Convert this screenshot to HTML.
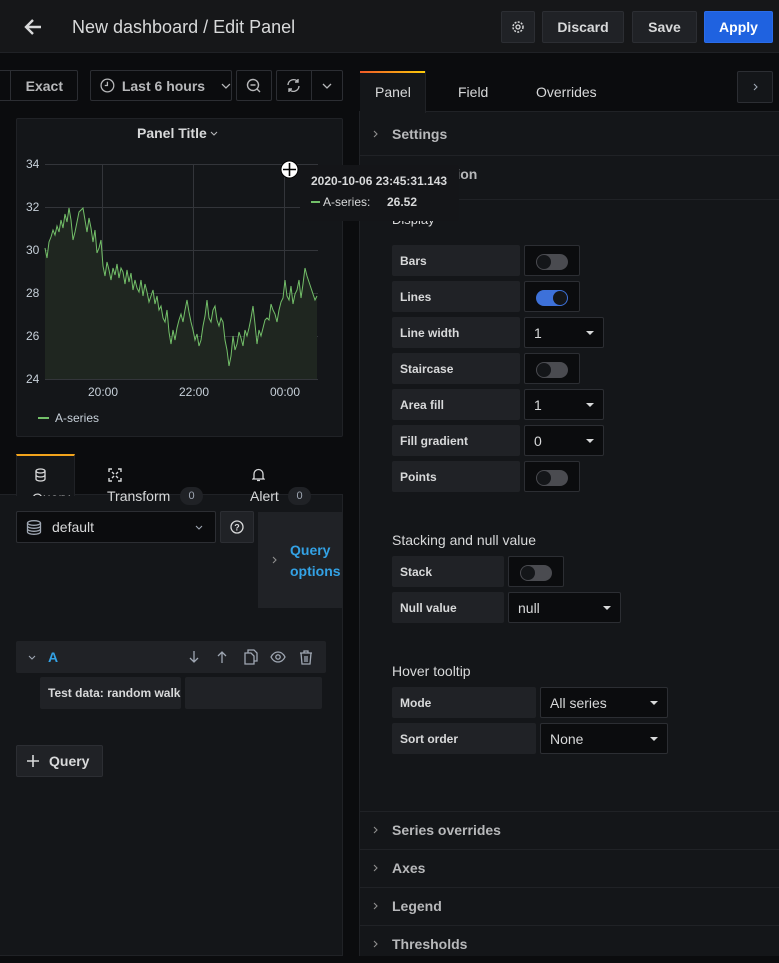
<!DOCTYPE html>
<html><head><meta charset="utf-8"><style>
*{box-sizing:border-box;margin:0;padding:0}
body{width:779px;height:956px;overflow:hidden;background:#0b0c0e;font-family:"Liberation Sans",sans-serif;color:#d8d9da;position:relative;font-size:14px}
.a{position:absolute}
.btn{position:absolute;background:#202226;border:1px solid #2c2e33;border-radius:2px;color:#d8d9da;font-weight:bold;font-size:14px;display:flex;align-items:center;justify-content:center}
.tb{position:absolute;background:#0b0c0e;border:1px solid #2c2e33;border-radius:2px;color:#c7d0d9;display:flex;align-items:center;justify-content:center;font-size:14px;font-weight:bold;white-space:nowrap}
.lbl{position:absolute;left:392px;height:31px;background:#202226;border-radius:2px;font-size:12px;font-weight:bold;color:#d8d9da;padding-left:8px;display:flex;align-items:center}
.ctl{position:absolute;height:31px;background:#0b0c0e;border:1px solid #2c2e33;border-radius:2px;color:#d8d9da;font-size:14px;padding-left:9px;display:flex;align-items:center}
.tg{position:absolute;left:11px;top:8px;width:32px;height:16px;border-radius:8px;background:#4a4b50}
.tg:after{content:"";position:absolute;left:1px;top:1px;width:14px;height:14px;border-radius:7px;background:#141619}
.tg.on{background:#3d71d9}.tg.on:after{left:17px}
.car{position:absolute;right:9px;top:13px;width:0;height:0;border-left:4px solid transparent;border-right:4px solid transparent;border-top:4px solid #d8d9da}
.sec{position:absolute;left:360px;width:419px;border-top:1px solid #202226;height:38px}
.sec span{position:absolute;left:32px;top:10px;font-size:14px;font-weight:bold;color:#b7b8ba}
.sec svg{position:absolute;left:13px;top:14px}
.h{position:absolute;left:392px;font-size:14px;color:#d8d9da}
</style></head><body>
<!-- header -->
<div class="a" style="left:0;top:0;width:779px;height:53px;background:#161719;border-bottom:1px solid #202226"></div>
<svg class="a" style="left:22px;top:16px" width="22" height="22" viewBox="0 0 22 22"><path d="M19 11H4M11 4L4 11l7 7" stroke="#d8d9da" stroke-width="2.4" fill="none"/></svg>
<div class="a" style="left:72px;top:17px;font-size:18px;color:#d8d9da">New dashboard / Edit Panel</div>
<div class="btn" style="left:501px;top:11px;width:34px;height:32px"><svg width="14" height="14" viewBox="0 0 14 14"><circle cx="7" cy="7" r="2" fill="none" stroke="#d8d9da" stroke-width="1.3"/><circle cx="7" cy="7" r="5" fill="none" stroke="#d8d9da" stroke-width="1.5" stroke-dasharray="2 1.3"/></svg></div>
<div class="btn" style="left:542px;top:11px;width:82px;height:32px">Discard</div>
<div class="btn" style="left:632px;top:11px;width:65px;height:32px">Save</div>
<div class="btn" style="left:704px;top:11px;width:69px;height:32px;background:#1f62e0;border-color:#2b6ce8;color:#fff">Apply</div>

<!-- left toolbar -->
<div class="tb" style="left:-2px;top:70px;width:80px;height:31px;justify-content:flex-end;padding-right:14px;color:#b7b8ba">Exact</div>
<div class="a" style="left:10px;top:71px;width:1px;height:29px;background:#2c2e33"></div>
<div class="tb" style="left:90px;top:70px;width:142px;height:31px;justify-content:flex-start;padding-left:9px;color:#b7b8ba"><svg width="15" height="15" viewBox="0 0 14 14"><circle cx="7" cy="7" r="6" fill="none" stroke="#b7b8ba" stroke-width="1.2"/><path d="M7 3.5V7H4.5" stroke="#b7b8ba" stroke-width="1.2" fill="none"/></svg><span style="margin-left:7px">Last 6 hours</span><svg style="margin-left:16px" width="10" height="6" viewBox="0 0 10 6"><path d="M1 1l4 4 4-4" stroke="#b7b8ba" stroke-width="1.3" fill="none"/></svg></div>
<div class="tb" style="left:236px;top:70px;width:36px;height:31px"><svg width="16" height="16" viewBox="0 0 16 16"><circle cx="7" cy="7" r="5.5" fill="none" stroke="#b7b8ba" stroke-width="1.4"/><path d="M4.5 7h5M11 11l3 3" stroke="#b7b8ba" stroke-width="1.4"/></svg></div>
<div class="tb" style="left:276px;top:70px;width:67px;height:31px"></div>
<div class="a" style="left:311px;top:71px;width:1px;height:29px;background:#2c2e33"></div>
<svg class="a" style="left:285px;top:77px" width="17" height="17" viewBox="0 0 17 17"><path d="M3 8a5.5 5.5 0 0 1 10-3M14 9a5.5 5.5 0 0 1-10 3M13 2v3h-3M4 15v-3h3" stroke="#b7b8ba" stroke-width="1.4" fill="none"/></svg>
<svg class="a" style="left:322px;top:83px" width="10" height="6" viewBox="0 0 10 6"><path d="M1 1l4 4 4-4" stroke="#b7b8ba" stroke-width="1.3" fill="none"/></svg>

<!-- panel -->
<div class="a" style="left:16px;top:118px;width:327px;height:319px;background:#141619;border:1px solid #202226;border-radius:2px"></div>
<div class="a" style="left:137px;top:125px;font-size:14px;font-weight:bold;color:#d8d9da">Panel Title</div>
<svg class="a" style="left:210px;top:131px" width="8" height="5" viewBox="0 0 8 5"><path d="M1 1l3 3 3-3" stroke="#b7b8ba" stroke-width="1.1" fill="none"/></svg>
<svg class="a" style="left:0;top:0" width="360" height="440">
<g stroke="#33353a" stroke-width="1"><line x1="45" y1="164.5" x2="318" y2="164.5"/><line x1="45" y1="207.5" x2="318" y2="207.5"/><line x1="45" y1="250.5" x2="318" y2="250.5"/><line x1="45" y1="293.5" x2="318" y2="293.5"/><line x1="45" y1="336.5" x2="318" y2="336.5"/><line x1="45" y1="379.5" x2="318" y2="379.5"/><line x1="102.5" y1="164" x2="102.5" y2="380"/><line x1="193.5" y1="164" x2="193.5" y2="380"/><line x1="284.5" y1="164" x2="284.5" y2="380"/></g>
<g font-size="12" fill="#c7d0d9" font-family="Liberation Sans"><text x="26" y="168">34</text><text x="26" y="211">32</text><text x="26" y="254">30</text><text x="26" y="297">28</text><text x="26" y="340">26</text><text x="26" y="383">24</text><text x="88" y="396">20:00</text><text x="179" y="396">22:00</text><text x="270" y="396">00:00</text><text x="55" y="422">A-series</text></g>
<line x1="38" y1="418" x2="49" y2="418" stroke="#73bf69" stroke-width="2"/>
<path d="M45,379 L45,248 47,258 49,242 51,237 53,230 55,235 57,226 59,232 61,220 63,228 65,214 67,222 69,208 71,220 73,240 75,232 77,222 79,212 81,210 83,208 85,220 87,232 89,218 91,228 93,242 95,230 97,253 99,248 101,240 103,266 105,276 107,262 109,270 111,280 113,268 115,275 117,264 119,278 121,268 123,272 125,284 127,270 129,282 131,273 133,290 135,280 137,288 139,292 141,280 143,296 145,284 147,292 149,302 151,296 153,290 155,304 157,296 159,310 161,306 163,318 165,322 167,310 169,332 171,344 173,330 175,340 177,328 179,320 181,314 183,322 185,310 187,300 189,312 191,322 193,330 195,340 197,334 199,346 201,340 203,326 205,316 207,300 209,318 211,322 213,310 215,306 217,320 219,326 221,318 223,322 225,340 227,350 229,366 231,356 233,336 235,350 237,344 239,332 241,338 243,346 245,330 247,336 249,328 251,318 253,306 255,324 257,344 259,330 261,336 263,328 265,320 267,318 269,320 271,304 273,310 275,314 277,322 279,310 281,302 283,298 285,280 287,296 289,300 291,286 293,304 295,294 297,290 299,280 301,298 303,284 305,268 307,276 309,282 311,288 313,294 315,300 317,296 L317,379Z" fill="#1f2620" stroke="none"/>
<polyline fill="none" stroke="#73bf69" stroke-width="1" points="45,248 47,258 49,242 51,237 53,230 55,235 57,226 59,232 61,220 63,228 65,214 67,222 69,208 71,220 73,240 75,232 77,222 79,212 81,210 83,208 85,220 87,232 89,218 91,228 93,242 95,230 97,253 99,248 101,240 103,266 105,276 107,262 109,270 111,280 113,268 115,275 117,264 119,278 121,268 123,272 125,284 127,270 129,282 131,273 133,290 135,280 137,288 139,292 141,280 143,296 145,284 147,292 149,302 151,296 153,290 155,304 157,296 159,310 161,306 163,318 165,322 167,310 169,332 171,344 173,330 175,340 177,328 179,320 181,314 183,322 185,310 187,300 189,312 191,322 193,330 195,340 197,334 199,346 201,340 203,326 205,316 207,300 209,318 211,322 213,310 215,306 217,320 219,326 221,318 223,322 225,340 227,350 229,366 231,356 233,336 235,350 237,344 239,332 241,338 243,346 245,330 247,336 249,328 251,318 253,306 255,324 257,344 259,330 261,336 263,328 265,320 267,318 269,320 271,304 273,310 275,314 277,322 279,310 281,302 283,298 285,280 287,296 289,300 291,286 293,304 295,294 297,290 299,280 301,298 303,284 305,268 307,276 309,282 311,288 313,294 315,300 317,296"/>
</svg>

<!-- query tabs -->
<div class="a" style="left:0;top:494px;width:343px;height:462px;background:#141619;border:1px solid #202226;border-left:none"></div>
<div class="a" style="left:16px;top:454px;width:59px;height:42px;background:#141619;border:1px solid #202226;border-bottom:none;border-top:2px solid #f2a41c;overflow:hidden">
<div style="position:absolute;left:0;top:-2px;width:100%;height:2px;background:linear-gradient(90deg,#f05a28,#fbca0a)"></div>
<svg style="position:absolute;left:17px;top:12px" width="13" height="14" viewBox="0 0 13 14"><ellipse cx="6.5" cy="3" rx="4.5" ry="2" fill="none" stroke="#d8d9da" stroke-width="1.3"/><path d="M2 3v8c0 1.1 2 2 4.5 2s4.5-.9 4.5-2V3M2 7c0 1.1 2 2 4.5 2S11 8.1 11 7" fill="none" stroke="#d8d9da" stroke-width="1.3"/></svg>
<div style="position:absolute;left:15px;top:34px;font-size:14px">Query</div></div>
<svg class="a" style="left:108px;top:468px" width="14" height="14" viewBox="0 0 14 14"><path d="M1 4V1h3M10 1h3v3M13 10v3h-3M4 13H1v-3M4 4l2 2M10 4L8 6M4 10l2-2M10 10l-2-2" stroke="#d8d9da" stroke-width="1.4" fill="none"/></svg>
<div class="a" style="left:107px;top:488px;font-size:14px">Transform</div>
<div class="a" style="left:180px;top:487px;width:23px;height:18px;border-radius:9px;background:#202226;font-size:11px;color:#9fa7b3;text-align:center;line-height:18px">0</div>
<svg class="a" style="left:252px;top:468px" width="13" height="14" viewBox="0 0 13 14"><path d="M2 10V6a4.5 4.5 0 0 1 9 0v4l1 1H1zM5 12.5h3M6.5 1v1" stroke="#d8d9da" stroke-width="1.3" fill="none"/></svg>
<div class="a" style="left:250px;top:488px;font-size:14px">Alert</div>
<div class="a" style="left:288px;top:487px;width:23px;height:18px;border-radius:9px;background:#202226;font-size:11px;color:#9fa7b3;text-align:center;line-height:18px">0</div>

<div class="ctl" style="left:16px;top:511px;width:200px;height:32px"><svg width="16" height="15" viewBox="0 0 16 15"><ellipse cx="8" cy="3" rx="6.5" ry="2.3" fill="none" stroke="#9fa7b3" stroke-width="1.3"/><path d="M1.5 3v9c0 1.3 3 2.3 6.5 2.3s6.5-1 6.5-2.3V3M1.5 6c0 1.3 3 2.3 6.5 2.3S14.5 7.3 14.5 6M1.5 9c0 1.3 3 2.3 6.5 2.3S14.5 10.3 14.5 9" fill="none" stroke="#9fa7b3" stroke-width="1.3"/></svg><span style="margin-left:10px">default</span><svg style="position:absolute;right:12px;top:13px" width="8" height="5" viewBox="0 0 8 5"><path d="M1 1l3 3 3-3" stroke="#9fa7b3" stroke-width="1.1" fill="none"/></svg></div>
<div class="btn" style="left:220px;top:511px;width:34px;height:32px"><svg width="14" height="14" viewBox="0 0 14 14"><circle cx="7" cy="7" r="6" fill="none" stroke="#d8d9da" stroke-width="1.3"/><text x="7" y="10.5" font-size="9" font-weight="bold" fill="#d8d9da" text-anchor="middle" font-family="Liberation Sans">?</text></svg></div>
<div class="a" style="left:258px;top:512px;width:85px;height:96px;background:#202226"></div>
<svg class="a" style="left:272px;top:556px" width="5" height="8" viewBox="0 0 5 8"><path d="M1 1l3 3-3 3" stroke="#8e8e8e" stroke-width="1.1" fill="none"/></svg>
<div class="a" style="left:290px;top:540px;font-size:14px;font-weight:bold;color:#33a2e5;line-height:21px">Query<br>options</div>

<div class="a" style="left:16px;top:641px;width:310px;height:32px;background:#202226;border-radius:2px"></div>
<svg class="a" style="left:28px;top:655px" width="8" height="5" viewBox="0 0 8 5"><path d="M1 1l3 3 3-3" stroke="#9fa7b3" stroke-width="1.1" fill="none"/></svg>
<div class="a" style="left:48px;top:649px;font-size:14px;font-weight:bold;color:#33a2e5">A</div>
<svg class="a" style="left:186px;top:649px" width="130" height="16" viewBox="0 0 130 16">
<path d="M8 2v11M4 9l4 4 4-4" stroke="#9fa7b3" stroke-width="1.3" fill="none"/>
<path d="M36 14V3M32 7l4-4 4 4" stroke="#9fa7b3" stroke-width="1.3" fill="none"/>
<path d="M59 4h6l3 3v8h-9zM62 4V1h6l3 3v8h-3" stroke="#9fa7b3" stroke-width="1.3" fill="none"/>
<path d="M85 8c2-4 5-5 7-5s5 1 7 5c-2 4-5 5-7 5s-5-1-7-5z" stroke="#9fa7b3" stroke-width="1.3" fill="none"/><circle cx="92" cy="8" r="2.2" fill="none" stroke="#9fa7b3" stroke-width="1.3"/>
<path d="M114 4h12M118 4V2h4v2M115 4l1 11h8l1-11M119 7v6M121 7v6" stroke="#9fa7b3" stroke-width="1.3" fill="none"/></svg>
<div class="a" style="left:40px;top:677px;width:141px;height:32px;background:#202226;border-radius:2px;font-size:12px;font-weight:bold;color:#d8d9da;padding-left:8px;line-height:32px;white-space:nowrap;overflow:hidden">Test data: random walk</div>
<div class="a" style="left:185px;top:677px;width:137px;height:32px;background:#202226;border-radius:2px"></div>
<div class="btn" style="left:16px;top:745px;width:87px;height:32px;justify-content:flex-start;padding-left:10px"><svg style="margin-right:10px" width="12" height="12" viewBox="0 0 12 12"><path d="M6 0v12M0 6h12" stroke="#d8d9da" stroke-width="1.6"/></svg>Query</div>

<!-- right pane -->
<div class="a" style="left:359px;top:70px;width:420px;height:886px;background:#141619;border-left:1px solid #202226"></div>
<div class="a" style="left:359px;top:60px;width:420px;height:52px;background:#0b0c0e;border-bottom:1px solid #202226"></div>
<div class="a" style="left:360px;top:71px;width:66px;height:42px;background:#141619;border-right:1px solid #202226"><div style="height:2px;background:linear-gradient(90deg,#f05a28,#fbca0a)"></div></div>
<div class="a" style="left:375px;top:84px;font-size:14px;color:#d8d9da">Panel</div>
<div class="a" style="left:458px;top:84px;font-size:14px;color:#d8d9da">Field</div>
<div class="a" style="left:536px;top:84px;font-size:14px;color:#d8d9da">Overrides</div>
<div class="tb" style="left:737px;top:71px;width:36px;height:32px;background:#141619"><svg width="5" height="8" viewBox="0 0 5 8"><path d="M1 1l3 3-3 3" stroke="#9fa7b3" stroke-width="1.1" fill="none"/></svg></div>
<div class="sec" style="top:116px;border-top:none"><svg width="5" height="8" viewBox="0 0 5 8"><path d="M1 1l3 3-3 3" stroke="#8e8e8e" stroke-width="1.1" fill="none"/></svg><span>Settings</span></div>
<div class="sec" style="top:155px"><svg width="5" height="8" viewBox="0 0 5 8"><path d="M1 1l3 3-3 3" stroke="#8e8e8e" stroke-width="1.1" fill="none"/></svg><span>Visualization</span></div>
<div class="a" style="left:359px;top:199px;width:420px;height:1px;background:#202226"></div>
<div class="h" style="top:212px;font-size:13px">Display</div>

<div class="lbl" style="top:245px;width:128px">Bars</div><div class="ctl" style="left:524px;top:245px;width:56px"><div class="tg"></div></div>
<div class="lbl" style="top:281px;width:128px">Lines</div><div class="ctl" style="left:524px;top:281px;width:56px"><div class="tg on"></div></div>
<div class="lbl" style="top:317px;width:128px">Line width</div><div class="ctl" style="left:524px;top:317px;width:80px">1<div class="car"></div></div>
<div class="lbl" style="top:353px;width:128px">Staircase</div><div class="ctl" style="left:524px;top:353px;width:56px"><div class="tg"></div></div>
<div class="lbl" style="top:389px;width:128px">Area fill</div><div class="ctl" style="left:524px;top:389px;width:80px">1<div class="car"></div></div>
<div class="lbl" style="top:425px;width:128px">Fill gradient</div><div class="ctl" style="left:524px;top:425px;width:80px">0<div class="car"></div></div>
<div class="lbl" style="top:461px;width:128px">Points</div><div class="ctl" style="left:524px;top:461px;width:56px"><div class="tg"></div></div>

<div class="h" style="top:532px">Stacking and null value</div>
<div class="lbl" style="top:556px;width:112px">Stack</div><div class="ctl" style="left:508px;top:556px;width:56px"><div class="tg"></div></div>
<div class="lbl" style="top:592px;width:112px">Null value</div><div class="ctl" style="left:508px;top:592px;width:113px">null<div class="car"></div></div>
<div class="h" style="top:663px">Hover tooltip</div>
<div class="lbl" style="top:687px;width:144px">Mode</div><div class="ctl" style="left:540px;top:687px;width:128px">All series<div class="car"></div></div>
<div class="lbl" style="top:723px;width:144px">Sort order</div><div class="ctl" style="left:540px;top:723px;width:128px">None<div class="car"></div></div>

<div class="sec" style="top:811px"><svg width="5" height="8" viewBox="0 0 5 8"><path d="M1 1l3 3-3 3" stroke="#8e8e8e" stroke-width="1.1" fill="none"/></svg><span>Series overrides</span></div>
<div class="sec" style="top:849px"><svg width="5" height="8" viewBox="0 0 5 8"><path d="M1 1l3 3-3 3" stroke="#8e8e8e" stroke-width="1.1" fill="none"/></svg><span>Axes</span></div>
<div class="sec" style="top:887px"><svg width="5" height="8" viewBox="0 0 5 8"><path d="M1 1l3 3-3 3" stroke="#8e8e8e" stroke-width="1.1" fill="none"/></svg><span>Legend</span></div>
<div class="sec" style="top:925px"><svg width="5" height="8" viewBox="0 0 5 8"><path d="M1 1l3 3-3 3" stroke="#8e8e8e" stroke-width="1.1" fill="none"/></svg><span>Thresholds</span></div>

<!-- tooltip -->
<div class="a" style="left:300px;top:165px;width:159px;height:56px;background:#141518;border-radius:3px"></div>
<div class="a" style="left:311px;top:174px;font-size:12px;font-weight:bold;color:#d8d9da">2020-10-06 23:45:31.143</div>
<div class="a" style="left:311px;top:201px;width:9px;height:2px;background:#73bf69"></div>
<div class="a" style="left:323px;top:195px;font-size:12px;color:#d8d9da">A-series:</div>
<div class="a" style="left:387px;top:195px;font-size:12px;font-weight:bold;color:#d8d9da">26.52</div>
<svg class="a" style="left:280px;top:160px" width="19" height="19" viewBox="0 0 19 19"><circle cx="9.5" cy="9.5" r="8.5" fill="#fff" stroke="#000" stroke-width="1"/><path d="M9.5 3v13M3 9.5h13" stroke="#000" stroke-width="1.6"/></svg>
</body></html>
